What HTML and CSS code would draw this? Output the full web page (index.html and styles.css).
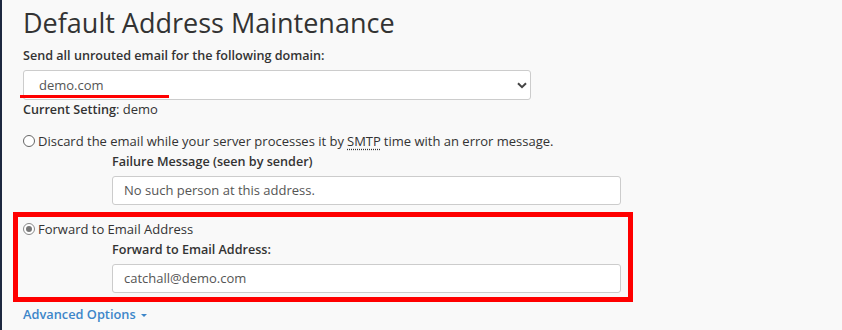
FILE: index.html
```html
<!DOCTYPE html>
<html lang="en">
<head>
    <meta charset="UTF-8">
    <title>Default Address Maintenance</title>
    <link rel="stylesheet" href="styles.css">
</head>
<body>
	<div id="site">
		<h1 class="page-title">Default Address Maintenance</h1>

		<div class="field">
			<label class="field-label">Send all unrouted email for the following domain:</label>
			<div class="select-wrap">
				<div class="select-box">
					<span>demo.com</span>
					<svg class="caret" width="10" height="7" viewBox="0 0 10 7"><path d="M1 1.2 L5 5.2 L9 1.2" fill="none" stroke="#444" stroke-width="2"/></svg>
				</div>
				<div class="mark-underline"></div>
			</div>
			<div class="current"><strong>Current Setting</strong>: demo</div>
		</div>

		<div class="option">
			<div class="radio-row">
				<span class="radio"></span>
				Discard the email while your server processes it by <abbr>SMTP</abbr> time with an error message.
			</div>
			<div class="sub">
				<label class="field-label">Failure Message (seen by sender)</label>
				<div class="text-input">No such person at this address.</div>
			</div>
		</div>

		<div class="option highlight">
			<div class="radio-row">
				<span class="radio checked"></span>
				Forward to Email Address
			</div>
			<div class="sub">
				<label class="field-label">Forward to Email Address:</label>
				<div class="text-input">catchall@demo.com</div>
			</div>
		</div>

		<a class="advanced" href="#">Advanced Options <span class="down"></span></a>
	</div>
</body>
</html>
```

FILE: styles.css
```css
body, html {
    margin: 0;
    padding: 0;
    height: 100%;
    overflow: hidden;
}

body {
    background: #f9f9f9;
    border-left: 2px solid #1d2840;
    font-family: "Open Sans", sans-serif;
    font-size: 13px;
    color: #333;
}

#site {
    padding: 0 0 0 21px;
}

.page-title {
    margin: 0;
    padding-top: 3px;
    font-size: 27px;
    font-weight: 400;
    line-height: 40px;
    color: #333;
}

.field-label {
    display: block;
    font-weight: 600;
    font-size: 12.6px;
    line-height: 18px;
}

strong {
    font-weight: 600;
    font-size: 12.6px;
}

.field > .field-label {
    margin-top: 4px;
}

.select-wrap {
    position: relative;
    width: 508px;
    margin-top: 5px;
}

.select-box {
    height: 28px;
    border: 1px solid #ccc;
    border-radius: 3px;
    background: #fff;
    display: flex;
    align-items: center;
    justify-content: space-between;
    padding: 0 3px 0 15px;
    font-size: 13px;
    color: #555;
}

.mark-underline {
    position: absolute;
    left: -3px;
    top: 25px;
    width: 149px;
    height: 3px;
    background: #f00;
}

.current {
    line-height: 18px;
}

.option {
    margin-top: 13px;
}

.radio-row {
    display: flex;
    align-items: center;
    gap: 3px;
    line-height: 18px;
}

.radio {
    width: 10px;
    height: 10px;
    border: 1px solid #666;
    border-radius: 50%;
    background: #fff;
    position: relative;
}

.radio.checked {
    border-color: #888;
}

.radio.checked::after {
    content: "";
    position: absolute;
    left: 2px;
    top: 2px;
    width: 6px;
    height: 6px;
    border-radius: 50%;
    background: #777;
}

abbr {
    text-decoration: underline dotted;
    text-underline-offset: 3px;
}

.sub {
    padding-left: 89px;
    margin-top: 3px;
}

.text-input {
    width: 496px;
    height: 27px;
    margin-top: 5px;
    border: 1px solid #ccc;
    border-radius: 3px;
    background: #fff;
    padding-left: 11px;
    line-height: 27px;
    color: #555;
}

.highlight {
    margin: 7px 0 0 -10px;
    width: 605px;
    border: 5px solid #f00;
    padding: 3px 0 4px 5px;
}

.advanced {
    display: inline-block;
    margin-top: 3px;
    font-weight: 600;
    font-size: 12.8px;
    line-height: 19px;
    color: #3d86c9;
    text-decoration: none;
}

.down {
    display: inline-block;
    width: 0;
    height: 0;
    border-left: 3px solid transparent;
    border-right: 3px solid transparent;
    border-top: 3px solid #3d86c9;
    vertical-align: middle;
    margin-left: 2px;
}
```
